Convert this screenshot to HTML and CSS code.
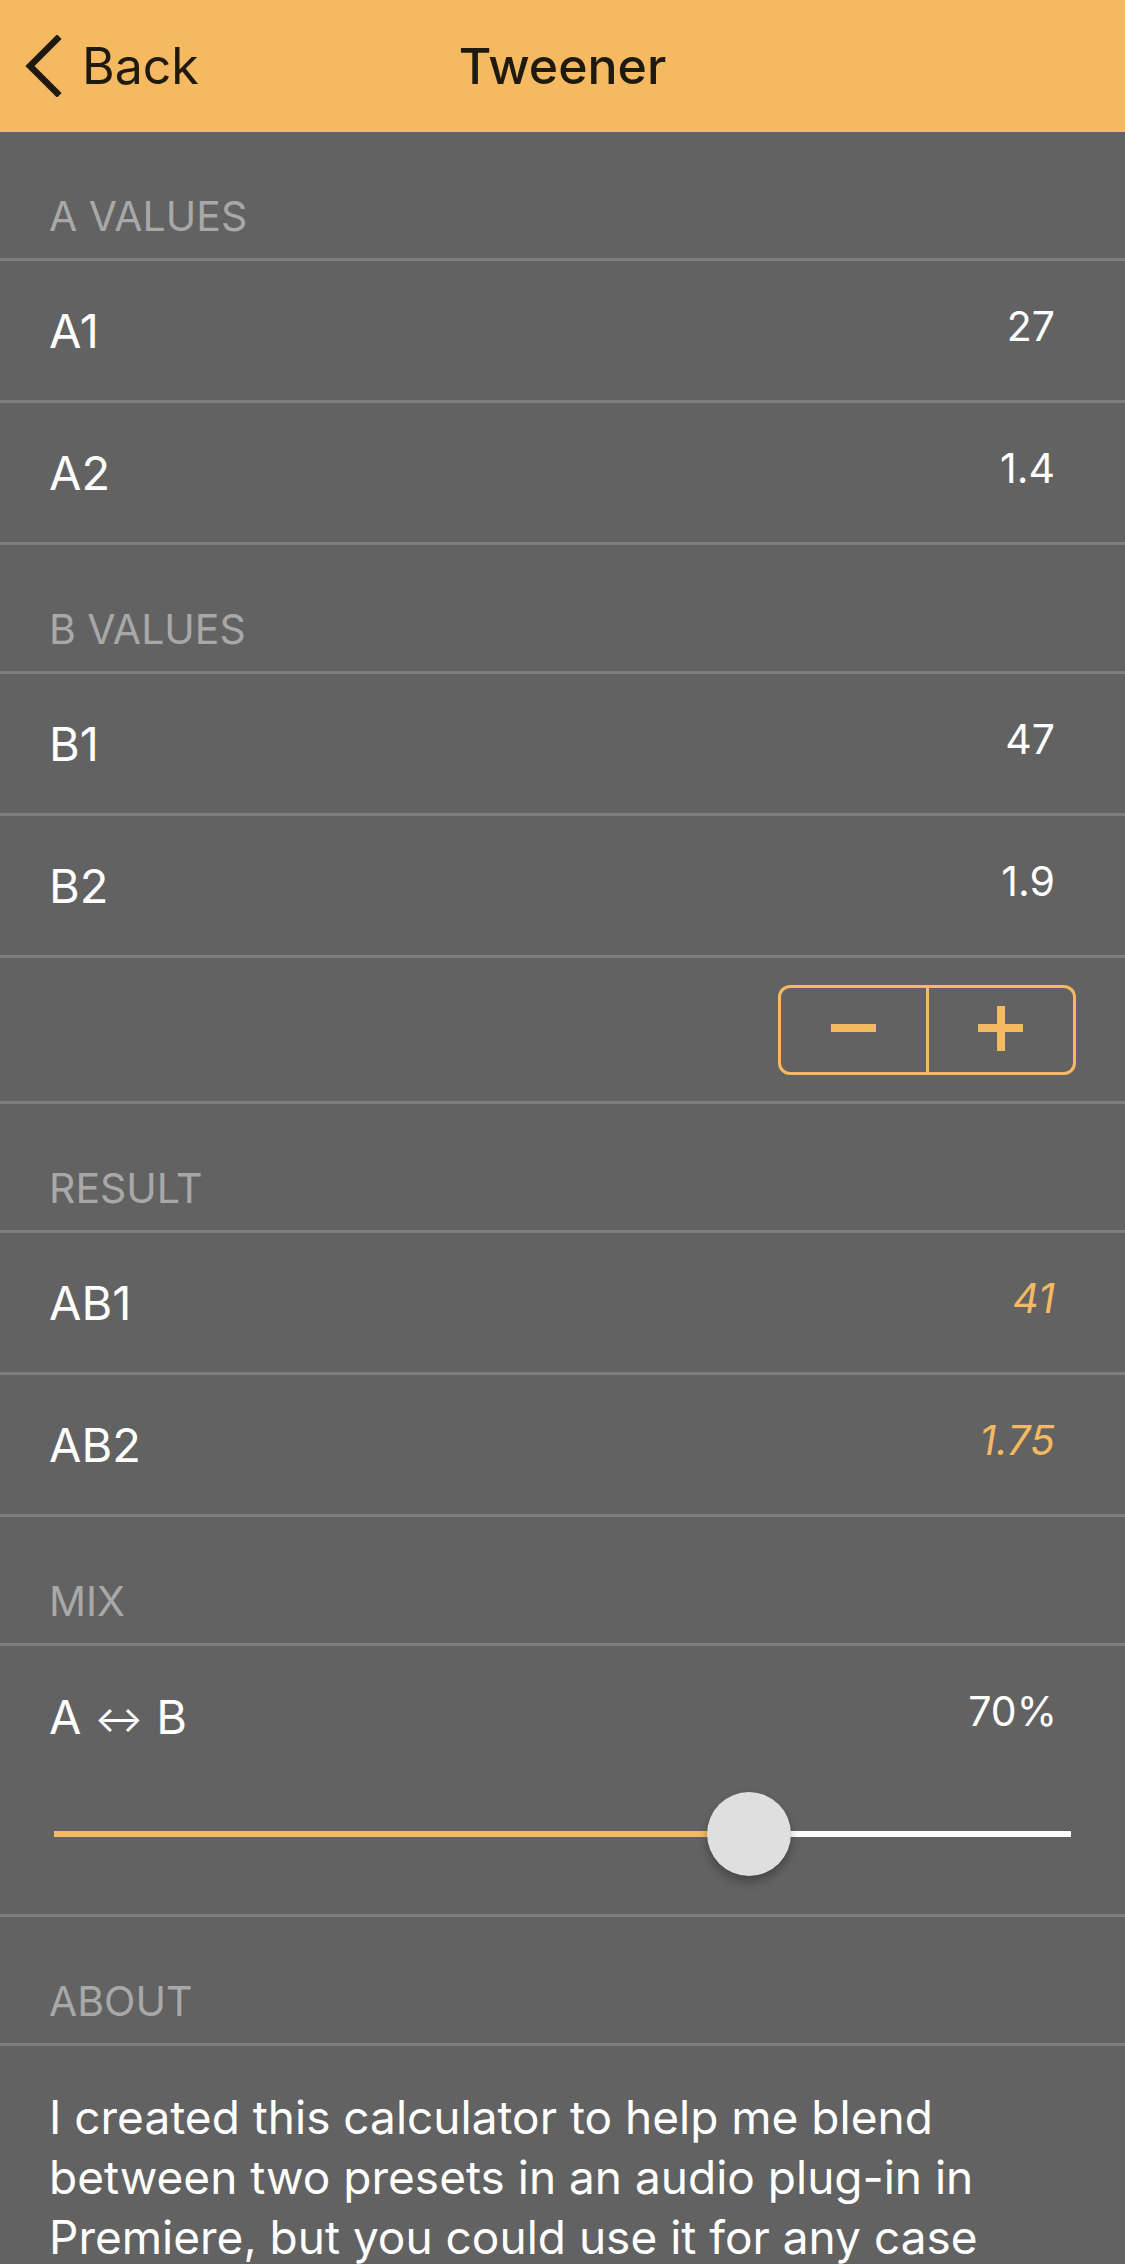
FILE: index.html
```html
<!DOCTYPE html>
<html lang="en">
<head>
  <meta charset="UTF-8">
  <title>Tweener</title>
  <link rel="stylesheet" href="styles.css">
</head>
<body>
  <div class="screen">
    <header class="nav-bar">
      <a class="back" href="#">
        <svg class="chevron" width="40" height="62" viewBox="0 0 40 62">
          <path d="M33 4 L6 31 L33 58" fill="none" stroke="#1f1a10" stroke-width="6.5" stroke-linecap="square"/>
        </svg>
        <span>Back</span>
      </a>
      <h1 class="title">Tweener</h1>
      <span></span>
    </header>

    <div class="section-header">A Values</div>
    <div class="row"><span class="label">A1</span><span class="value">27</span></div>
    <div class="row"><span class="label">A2</span><span class="value">1.4</span></div>

    <div class="section-header">B Values</div>
    <div class="row"><span class="label">B1</span><span class="value">47</span></div>
    <div class="row"><span class="label">B2</span><span class="value">1.9</span></div>

    <div class="stepper-row">
      <div class="stepper">
        <button class="step minus"><span class="bar"></span></button>
        <button class="step plus"><span class="bar"></span><span class="bar vertical"></span></button>
      </div>
    </div>

    <div class="section-header">Result</div>
    <div class="row"><span class="label">AB1</span><span class="value result">41</span></div>
    <div class="row"><span class="label">AB2</span><span class="value result">1.75</span></div>

    <div class="section-header">Mix</div>
    <div class="slider-cell">
      <div class="slider-head">
        <span class="label">A <span class="arrow">&harr;</span> B</span>
        <span class="value">70%</span>
      </div>
      <div class="slider">
        <div class="track"><div class="track-fill" style="width: 68.3%"></div></div>
        <div class="thumb" style="left: 64.2%"></div>
      </div>
    </div>

    <div class="section-header">About</div>
    <p class="about">I created this calculator to help me blend between two presets in an audio plug-in in Premiere, but you could use it for any case where you need a value somewhere between two others.</p>
  </div>
</body>
</html>
```

FILE: styles.css
```css
body {
  margin: 0;
  background-color: #626262;
  font-family: Inter, "Noto Sans", sans-serif;
  color: #ffffff;
}

.screen {
  height: 100vh;
  overflow: hidden;
}

.nav-bar {
  height: 132px;
  background-color: #f4b961;
  display: grid;
  grid-template-columns: 1fr auto 1fr;
  align-items: center;
  color: #1f1a10;
}

.back {
  display: flex;
  align-items: center;
  gap: 18px;
  padding-left: 24px;
  color: #1f1a10;
  text-decoration: none;
  font-size: 50px;
}

.title {
  margin: 0;
  font-size: 50px;
  font-weight: 500;
}

.section-header {
  height: 129px;
  box-sizing: border-box;
  display: flex;
  align-items: flex-end;
  padding: 0 49px 21px;
  border-bottom: 3px solid #7d7d7d;
  color: #a8a8a8;
  font-size: 41px;
  line-height: 41px;
  text-transform: uppercase;
}

.row {
  height: 142px;
  box-sizing: border-box;
  display: flex;
  align-items: center;
  justify-content: space-between;
  padding: 0 70px 0 49px;
  border-bottom: 3px solid #7d7d7d;
}

.label {
  font-size: 47px;
  line-height: 47px;
}

.arrow {
  font-size: 36px;
  vertical-align: 2px;
}

.value {
  font-size: 41px;
  line-height: 41px;
  margin-bottom: 8px;
}

.value.result {
  color: #f4b961;
  font-style: italic;
}

.stepper-row {
  height: 146px;
  box-sizing: border-box;
  display: flex;
  justify-content: flex-end;
  align-items: flex-start;
  padding: 27px 49px 0 0;
  border-bottom: 3px solid #7d7d7d;
}

.stepper {
  width: 298px;
  height: 90px;
  box-sizing: border-box;
  display: flex;
  border: 3px solid #f4b961;
  border-radius: 12px;
  overflow: hidden;
}

.step {
  flex: 1;
  position: relative;
  display: flex;
  align-items: center;
  justify-content: center;
  margin: 0;
  padding: 0;
  background: none;
  border: none;
  cursor: pointer;
}

.step.plus {
  border-left: 3px solid #f4b961;
}

.bar {
  width: 45px;
  height: 8px;
  background-color: #f4b961;
  margin-bottom: 4px;
}

.bar.vertical {
  position: absolute;
  width: 8px;
  height: 45px;
  margin: 0 0 4px;
}

.slider-cell {
  height: 271px;
  box-sizing: border-box;
  padding-top: 47px;
  border-bottom: 3px solid #7d7d7d;
}

.slider-head {
  display: flex;
  justify-content: space-between;
  align-items: flex-start;
  padding: 0 68px 0 49px;
}

.slider-head .value {
  margin: -2px 0 0;
}

.slider {
  position: relative;
  height: 84px;
  margin: 49px 54px 0;
}

.track {
  position: absolute;
  left: 0;
  right: 0;
  top: 39px;
  height: 6px;
  background-color: #ffffff;
}

.track-fill {
  height: 100%;
  background-color: #f4b961;
}

.thumb {
  position: absolute;
  top: 0;
  width: 84px;
  height: 84px;
  border-radius: 50%;
  background-color: #dfdfdf;
  box-shadow: 0 6px 10px rgba(0, 0, 0, 0.28), 0 0 1px rgba(0, 0, 0, 0.2);
}

.about {
  margin: 0;
  padding: 41px 49px 0;
  font-size: 46px;
  line-height: 60px;
}
```
